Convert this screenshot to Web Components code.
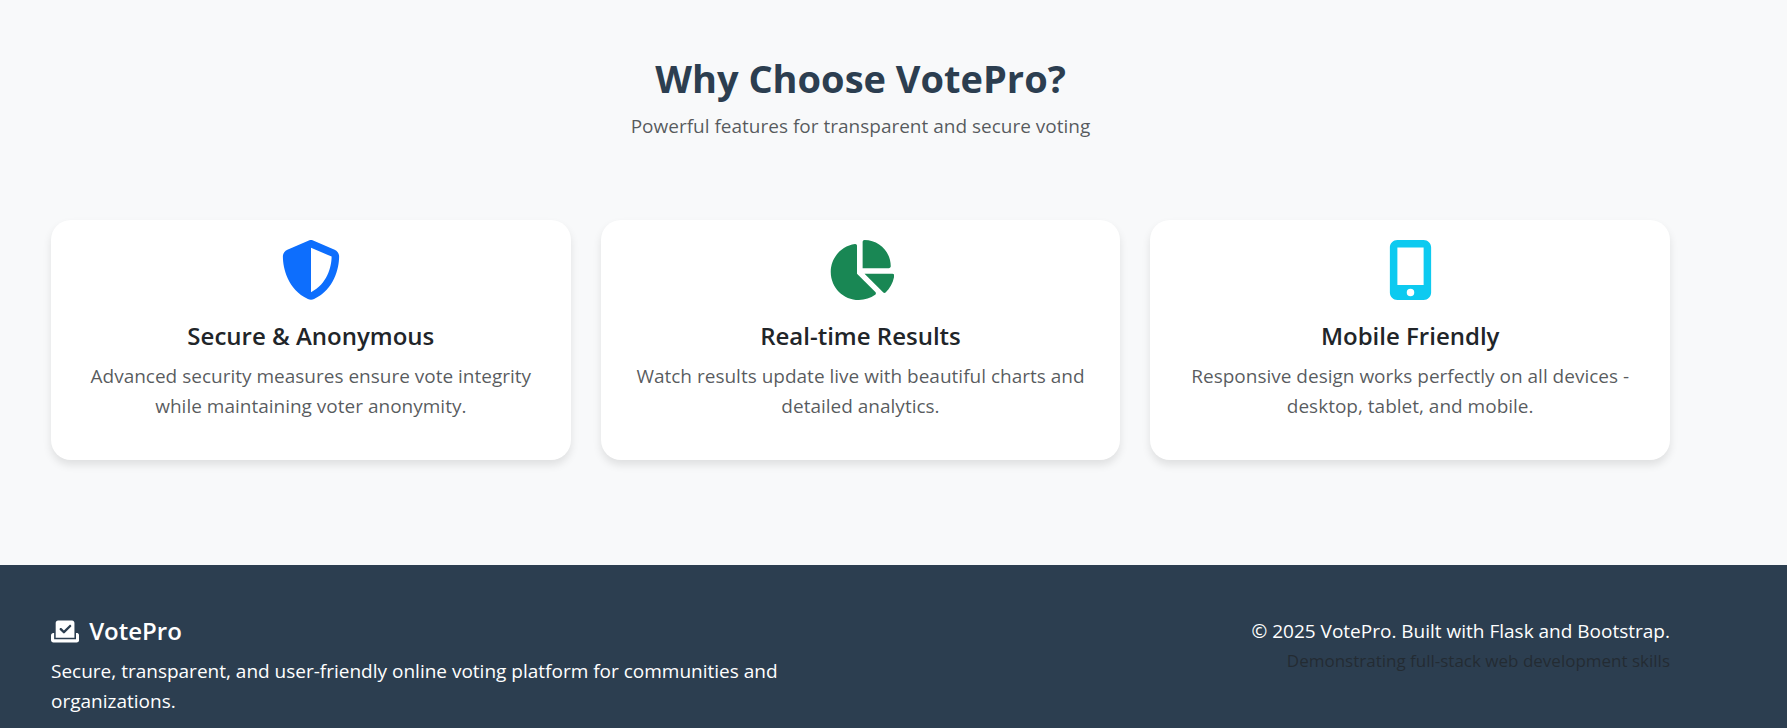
<!DOCTYPE html>
<html lang="en">
<head>
<meta charset="utf-8">
<meta name="viewport" content="width=device-width, initial-scale=1">
<title>VotePro</title>
<style>
  html, body { margin: 0; }
  body {
    font-family: "Segoe UI", "Open Sans", "Noto Sans", sans-serif;
    font-size: 19px;
    line-height: 30px;
    color: #212529;
    background: #f8f9fa;
    --brand-dark: #2c3e50;
    --muted: rgba(33, 37, 41, .75);
    --gutter-left: 51px;
    --gutter-right: 117px;
  }
</style>
</head>
<body>
<vote-page></vote-page>
<script>
  const ICONS = {
    shield: ['0 0 512 512', 'M256 0c4.600 0 9.200 1 13.400 2.900L457.700 82.800c22 9.300 38.400 31 38.300 57.200c-.5 99.200-41.300 280.700-213.600 363.200c-16.700 8-36.100 8-52.800 0C57.300 420.700 16.500 239.200 16 140c-.1-26.200 16.300-47.900 38.300-57.200L242.700 2.900C246.800 1 251.400 0 256 0zm0 66.800V444.800C394 378 431.100 230.100 432 141.400L256 66.800z'],
    pie: ['0 0 576 512', 'M304 240V16.600c0-9 7-16.600 16-16.600C443.700 0 544 100.300 544 224c0 9-7.600 16-16.600 16H304zM32 272C32 150.700 122.100 50.300 239 34.300c9.200-1.300 17 6.100 17 15.400V288L412.500 444.500c6.700 6.700 6.200 17.700-1.500 23.100C371.800 495.600 323.800 512 272 512C139.500 512 32 404.600 32 272zm526.400 16c9.300 0 16.600 7.800 15.400 17c-7.700 55.900-34.600 105.600-73.900 142.300c-6 5.600-15.400 5.200-21.200-.7L320 288H558.400z'],
    mobile: ['0 0 384 512', 'M16 64C16 28.700 44.700 0 80 0H304c35.300 0 64 28.700 64 64V448c0 35.300-28.700 64-64 64H80c-35.300 0-64-28.700-64-64V64zM224 448a32 32 0 1 0-64 0 32 32 0 1 0 64 0zM304 64H80V384H304V64z'],
    ballot: ['0 0 576 512', 'M96 80c0-26.500 21.500-48 48-48H432c26.500 0 48 21.500 48 48V384H96V80zm313 47c-9.400-9.400-24.600-9.400-33.900 0l-111 111-47-47c-9.400-9.400-24.600-9.400-33.900 0s-9.400 24.600 0 33.900l64 64c9.400 9.400 24.600 9.400 33.900 0L409 161c9.400-9.400 9.400-24.600 0-33.900zM0 336c0-26.500 21.500-48 48-48H64V416H512V288h16c26.500 0 48 21.500 48 48v96c0 26.500-21.500 48-48 48H48c-26.500 0-48-21.500-48-48V336z']
  };

  function define(name, html, setup) {
    customElements.define(name, class extends HTMLElement {
      constructor() {
        super();
        this.attachShadow({ mode: 'open' }).innerHTML = html;
      }
      connectedCallback() { if (setup) setup(this); }
    });
  }

  define('vote-icon', `
    <style>
      :host { display: inline-flex; height: 60px; }
      svg { display: block; height: 100%; fill: currentColor; }
    </style>
    <svg aria-hidden="true"><path/></svg>`,
    el => {
      const [box, d] = ICONS[el.getAttribute('name')];
      el.shadowRoot.querySelector('svg').setAttribute('viewBox', box);
      el.shadowRoot.querySelector('path').setAttribute('d', d);
    });

  define('feature-card', `
    <style>
      :host {
        display: flex; flex-direction: column; align-items: center;
        box-sizing: border-box;
        padding: 20px 20px 39px;
        border-radius: 20px;
        background: #fff;
        box-shadow: 0 5px 8px rgba(0, 0, 0, .1);
        text-align: center;
      }
      h3 { margin: 21px 0 10px; font-size: 24px; font-weight: 600; line-height: 30px; }
      p { margin: 0; color: var(--muted); }
    </style>
    <slot name="icon"></slot>
    <h3><slot name="title"></slot></h3>
    <p><slot></slot></p>`);

  define('features-section', `
    <style>
      :host { display: block; padding: 50px var(--gutter-right) 105px var(--gutter-left); }
      header { text-align: center; margin-bottom: 79px; }
      h2 { margin: 0; font-size: 38px; font-weight: 700; line-height: 56px; color: var(--brand-dark); }
      header p { margin: 5px 0 0; color: var(--muted); }
      .cards { display: grid; grid-template-columns: repeat(auto-fit, minmax(min(100%, 320px), 1fr)); gap: 30px; }
      .blue { color: #0d6efd; }
      .green { color: #198754; }
      .cyan { color: #0dcaf0; }
    </style>
    <header>
      <h2>Why Choose VotePro?</h2>
      <p>Powerful features for transparent and secure voting</p>
    </header>
    <div class="cards">
      <feature-card>
        <vote-icon slot="icon" class="blue" name="shield"></vote-icon>
        <span slot="title">Secure &amp; Anonymous</span>
        Advanced security measures ensure vote integrity while maintaining voter anonymity.
      </feature-card>
      <feature-card>
        <vote-icon slot="icon" class="green" name="pie"></vote-icon>
        <span slot="title">Real-time Results</span>
        Watch results update live with beautiful charts and detailed analytics.
      </feature-card>
      <feature-card>
        <vote-icon slot="icon" class="cyan" name="mobile"></vote-icon>
        <span slot="title">Mobile Friendly</span>
        Responsive design works perfectly on all devices - desktop, tablet, and mobile.
      </feature-card>
    </div>`);

  define('site-footer', `
    <style>
      :host {
        display: block; flex: 1;
        padding: 51px var(--gutter-right) 10px var(--gutter-left);
        background: var(--brand-dark); color: #fff;
      }
      .row { display: grid; grid-template-columns: repeat(auto-fit, minmax(min(100%, 400px), 1fr)); gap: 30px; }
      h5 { display: flex; align-items: center; gap: 10px; margin: 0 0 10px; font-size: 24px; font-weight: 600; line-height: 30px; }
      h5 vote-icon { height: 25px; }
      p { margin: 0; }
      .legal { text-align: right; }
      small { display: block; font-size: 17px; color: var(--muted-on-dark, #212529bf); }
    </style>
    <div class="row">
      <div>
        <h5><vote-icon name="ballot"></vote-icon>VotePro</h5>
        <p>Secure, transparent, and user-friendly online voting platform for communities and organizations.</p>
      </div>
      <div class="legal">
        <p>© 2025 VotePro. Built with Flask and Bootstrap.</p>
        <small>Demonstrating full-stack web development skills</small>
      </div>
    </div>`);

  define('vote-page', `
    <style>
      :host { display: flex; flex-direction: column; min-height: 100vh; }
    </style>
    <features-section></features-section>
    <site-footer></site-footer>`);
</script>
</body>
</html>
